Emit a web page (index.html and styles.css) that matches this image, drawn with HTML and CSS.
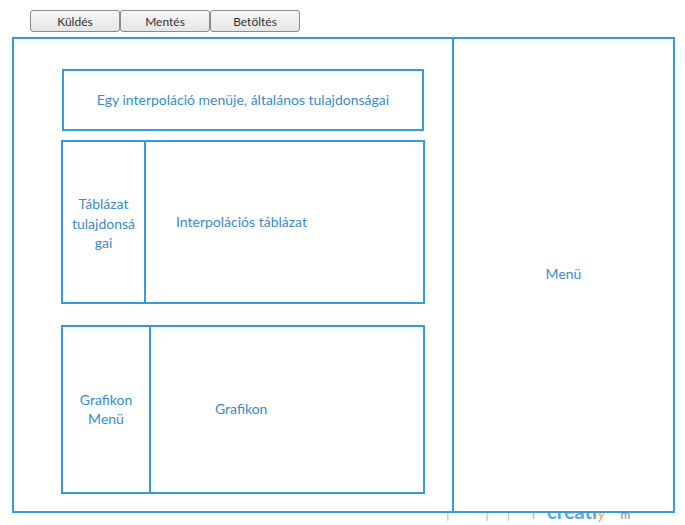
FILE: index.html
```html
<!DOCTYPE html>
<html lang="hu">
<head>
<meta charset="utf-8">
<title>Interpoláció</title>
<link rel="stylesheet" href="styles.css">
</head>
<body>
<div class="toolbar">
  <button class="btn">Küldés</button>
  <button class="btn">Mentés</button>
  <button class="btn">Betöltés</button>
</div>
<div class="stage">
  <div class="watermark"><span class="wm-gray">|&nbsp;&nbsp;&nbsp;&nbsp;&nbsp;&nbsp;&nbsp;&nbsp;&nbsp;&nbsp;|&nbsp;&nbsp;&nbsp;&nbsp;&nbsp;|&nbsp;&nbsp;&nbsp;&nbsp;&nbsp;&nbsp;l</span><span class="wm-blue">creatl</span><span class="wm-orange">y</span><span class="wm-gray wm-m">m</span></div>
  <div class="frame">
    <div class="workspace">
      <div class="box box-head">Egy interpoláció menüje, általános tulajdonságai</div>
      <div class="box box-split box-table">
        <div class="side side-table">Táblázat<br>tulajdonsá<br>gai</div>
        <div class="main main-table">Interpolációs táblázat</div>
      </div>
      <div class="box box-split box-chart">
        <div class="side side-chart">Grafikon<br>Menü</div>
        <div class="main main-chart">Grafikon</div>
      </div>
    </div>
    <div class="menu">Menü</div>
  </div>
</div>
</body>
</html>
```

FILE: styles.css
```css
* { box-sizing: border-box; }
html, body { margin: 0; padding: 0; background: #ffffff; }
body {
  font-family: Lato, "Liberation Sans", sans-serif;
  width: 685px;
  height: 525px;
  overflow: hidden;
}
.toolbar {
  display: flex;
  padding: 10px 0 0 30px;
  height: 37px;
}
.btn {
  width: 90px;
  height: 22px;
  margin: 0;
  padding: 1px 0 0 0;
  border: 1px solid #8c8c8c;
  border-radius: 3px;
  background: linear-gradient(#f6f6f6, #e6e6e6);
  font-family: Lato, "Liberation Sans", sans-serif;
  font-size: 12px;
  color: #333333;
  line-height: 19px;
}
.stage {
  position: relative;
  padding-left: 12px;
}
.watermark {
  position: absolute;
  left: 446px;
  top: 462px;
  font-family: Lato, "Liberation Sans", sans-serif;
  font-size: 20px;
  font-weight: bold;
  white-space: nowrap;
  line-height: 24px;
}
.wm-gray { color: #b8b8b8; font-weight: normal; font-size: 14px; }
.wm-blue { color: #5aa8de; margin-left: 12px; }
.wm-orange { color: #f5b060; font-style: italic; font-weight: normal; }
.wm-m { margin-left: 14px; font-size: 12px; color: #888888; }
.frame {
  position: relative;
  width: 663px;
  height: 476px;
  border: 2px solid #369bd9;
  background: #ffffff;
  display: grid;
  grid-template-columns: 438px 1fr;
}
.workspace {
  padding: 30px 0 0 47px;
  display: flex;
  flex-direction: column;
}
.menu {
  border-left: 2px solid #369bd9;
  display: flex;
  align-items: center;
  justify-content: center;
  color: #3b8bc7;
  font-size: 14px;
  padding-bottom: 4px;
}
.box {
  border: 2px solid #369bd9;
  color: #3b8bc7;
  font-size: 14px;
  line-height: 19.5px;
}
.box-head {
  width: 362px;
  height: 62px;
  margin-left: 1px;
  display: flex;
  align-items: center;
  justify-content: center;
}
.box-split {
  width: 364px;
  display: flex;
}
.box-table { height: 164px; margin-top: 9px; }
.box-chart { height: 169px; margin-top: 21px; }
.side {
  border-right: 2px solid #369bd9;
  display: flex;
  align-items: center;
  justify-content: center;
  text-align: center;
}
.side-table { width: 83px; padding-top: 3px; }
.side-chart { width: 88px; padding-bottom: 1px; }
.main {
  flex: 1;
  display: flex;
  align-items: center;
}
.main-table { padding-left: 30px; padding-bottom: 1px; }
.main-chart { padding-left: 64px; padding-bottom: 1px; }
```
